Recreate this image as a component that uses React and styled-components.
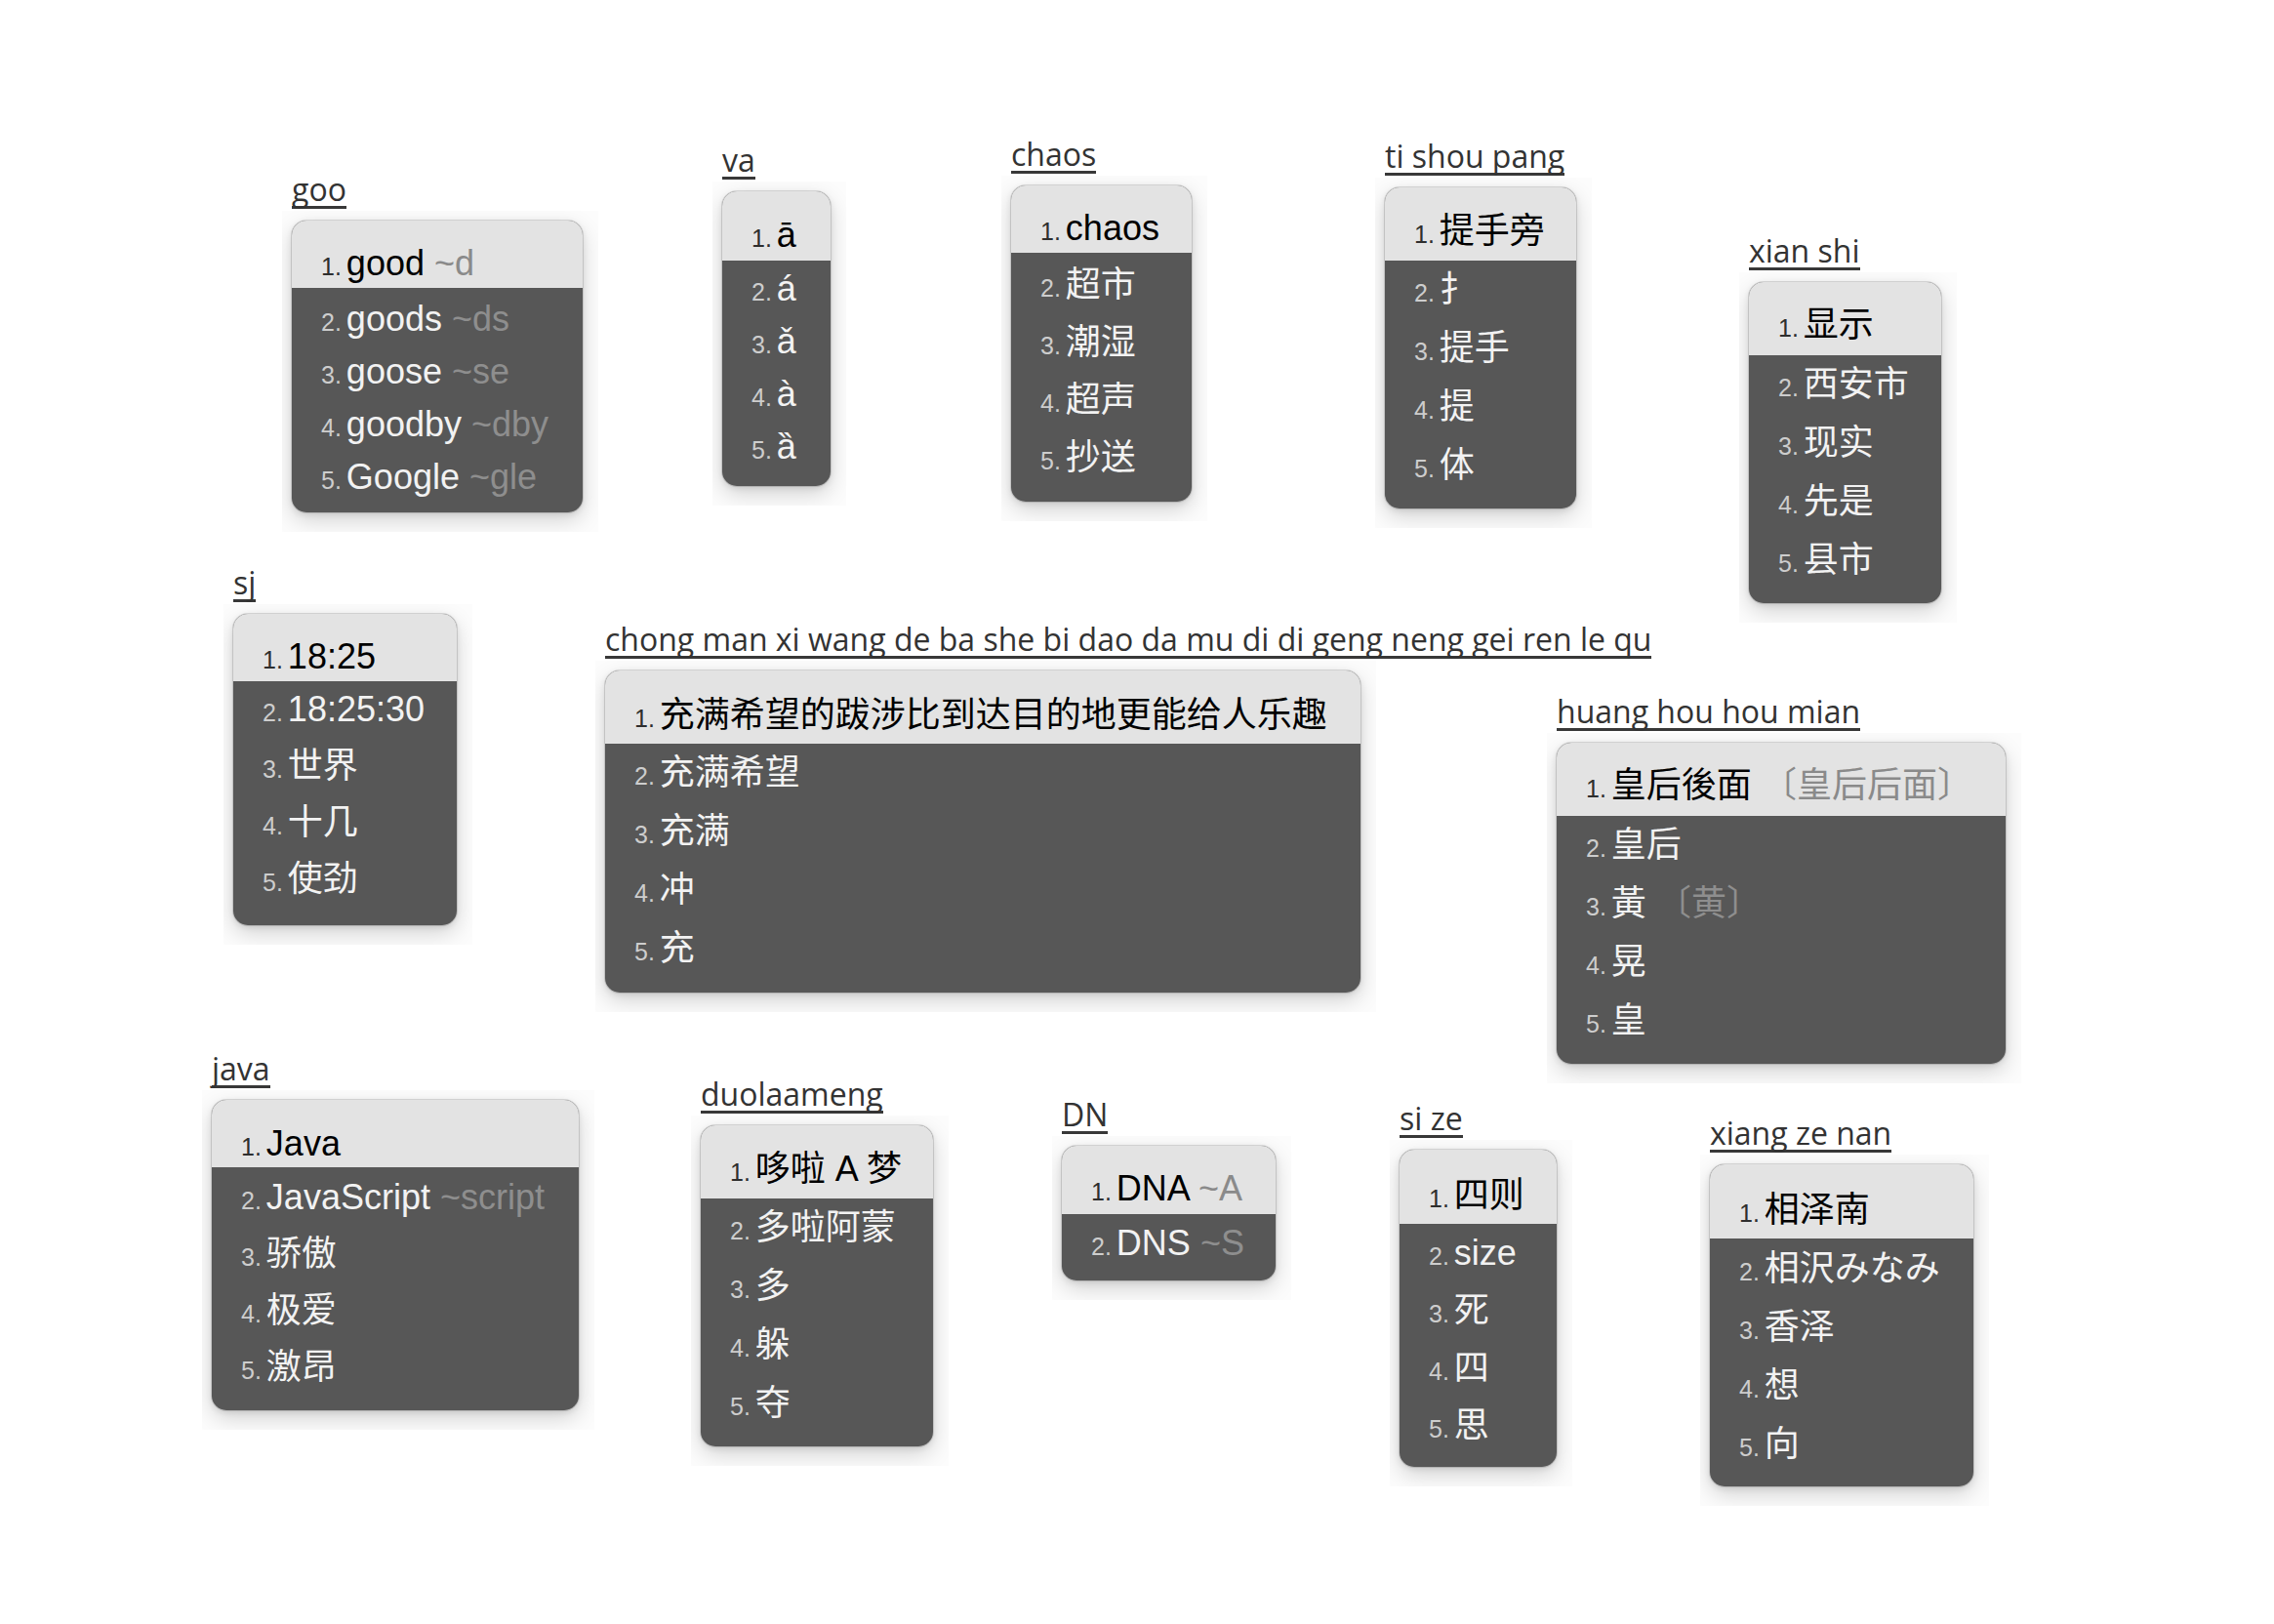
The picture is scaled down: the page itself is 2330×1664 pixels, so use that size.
import React from "react";
import styled, { createGlobalStyle } from "styled-components";

const GlobalStyle = createGlobalStyle`
  html, body {
    margin: 0;
    padding: 0;
    background: #fff;
  }
  body {
    font-family: "Liberation Sans", "Noto Sans CJK SC", sans-serif;
  }
`;

const Canvas = styled.div`
  position: relative;
  width: 2330px;
  height: 1664px;
  background: #fff;
  overflow: hidden;
`;

/* one pasted screenshot: the typed pinyin above, the candidate window below */
const Shot = styled.div`
  position: absolute;
  left: ${(p) => p.$x - 10}px;
  top: ${(p) => p.$y - 50}px;
  display: flex;
  flex-direction: column;
  align-items: flex-start;
`;

const Pinyin = styled.span`
  margin-left: 10px;
  font-family: "Open Sans", "Noto Sans", sans-serif;
  font-size: 32px;
  line-height: 35px;
  color: #333;
  border-bottom: 3px solid #383838;
  white-space: nowrap;
`;

const Frame = styled.div`
  margin-top: 2px;
  padding: 10px 16px 20px 10px;
  background: #fcfcfc;
  overflow: hidden;
`;

const Popup = styled.div`
  width: ${(p) => p.$w}px;
  border-radius: 15px;
  overflow: hidden;
  background: #575757;
  box-shadow: 0 0 0 1px rgba(0, 0, 0, 0.12), 0 8px 22px rgba(0, 0, 0, 0.17),
    0 2px 6px rgba(0, 0, 0, 0.1);
`;

const Current = styled.div`
  box-sizing: border-box;
  height: ${(p) => p.$h}px;
  padding: ${(p) => p.$pad}px 0 0 30px;
  background: #e3e3e3;
  display: flex;
  align-items: center;
`;

const List = styled.div`
  padding: ${(p) => p.$top}px 0 ${(p) => p.$bottom}px;
`;

const Row = styled.div`
  height: ${(p) => p.$h}px;
  padding-left: 30px;
  display: flex;
  align-items: center;
`;

const Line = styled.span`
  white-space: nowrap;
  line-height: 1.15;
`;

const Num = styled.span`
  font-size: 25px;
  margin-right: 5px;
  color: ${(p) => (p.$on ? "#2e2e2e" : "#cdcdcd")};
`;

const Word = styled.span`
  font-size: 36px;
  color: ${(p) => (p.$on ? "#000" : "#f2f2f2")};
`;

const Hint = styled.span`
  color: ${(p) => (p.$on ? "#8a8a8a" : "#8e8e8e")};
`;

const shots = [
  { key: "goo", x: 299, y: 226, w: 298, hl: 69, pad: 19, row: 54, top: 5, bottom: 9,
    items: [["good", "~d"], ["goods", "~ds"], ["goose", "~se"], ["goodby", "~dby"], ["Google", "~gle"]] },
  { key: "va", x: 740, y: 196, w: 111, hl: 71, pad: 19, row: 54, top: 2, bottom: 13,
    items: [["ā"], ["á"], ["ǎ"], ["à"], ["ȁ"]] },
  { key: "chaos", x: 1036, y: 190, w: 185, hl: 69, pad: 19, row: 59, top: 3, bottom: 16,
    items: [["chaos"], ["超市"], ["潮湿"], ["超声"], ["抄送"]] },
  { key: "ti shou pang", x: 1419, y: 192, w: 196, hl: 75, pad: 15, row: 60, top: 0, bottom: 14,
    items: [["提手旁"], ["扌"], ["提手"], ["提"], ["体"]] },
  { key: "xian shi", x: 1792, y: 289, w: 197, hl: 75, pad: 13, row: 60, top: 0, bottom: 14,
    items: [["显示"], ["西安市"], ["现实"], ["先是"], ["县市"]] },
  { key: "sj", x: 239, y: 629, w: 229, hl: 69, pad: 19, row: 58, top: 0, bottom: 18,
    items: [["18:25"], ["18:25:30"], ["世界"], ["十几"], ["使劲"]] },
  { key: "chong man xi wang de ba she bi dao da mu di di geng neng gei ren le qu", x: 620, y: 687, w: 774,
    hl: 75, pad: 17, row: 60, top: 0, bottom: 15,
    items: [["充满希望的跋涉比到达目的地更能给人乐趣"], ["充满希望"], ["充满"], ["冲"], ["充"]] },
  { key: "huang hou hou mian", x: 1595, y: 761, w: 460, hl: 75, pad: 13, row: 60, top: 0, bottom: 14,
    items: [["皇后後面", "〔皇后后面〕"], ["皇后"], ["黃", "〔黄〕"], ["晃"], ["皇"]] },
  { key: "java", x: 217, y: 1127, w: 376, hl: 69, pad: 21, row: 58, top: 2, bottom: 15,
    items: [["Java"], ["JavaScript", "~script"], ["骄傲"], ["极爱"], ["激昂"]] },
  { key: "duolaameng", x: 718, y: 1153, w: 238, hl: 75, pad: 15, row: 60, top: 0, bottom: 14,
    items: [["哆啦 A 梦"], ["多啦阿蒙"], ["多"], ["躲"], ["夺"]] },
  { key: "DN", x: 1088, y: 1174, w: 219, hl: 70, pad: 18, row: 55, top: 2, bottom: 11,
    items: [["DNA", "~A"], ["DNS", "~S"]] },
  { key: "si ze", x: 1434, y: 1178, w: 161, hl: 76, pad: 18, row: 59, top: 0, bottom: 13,
    items: [["四则"], ["size"], ["死"], ["四"], ["思"]] },
  { key: "xiang ze nan", x: 1752, y: 1193, w: 270, hl: 76, pad: 18, row: 60, top: 1, bottom: 13,
    items: [["相泽南"], ["相沢みなみ"], ["香泽"], ["想"], ["向"]] },
];

const Candidate = ({ n, item, on }) => (
  <Line>
    <Num $on={on}>{n}.</Num>
    <Word $on={on}>
      {item[0]}
      {item[1] && <Hint $on={on}> {item[1]}</Hint>}
    </Word>
  </Line>
);

const CandidateShot = ({ s }) => {
  const [first, ...rest] = s.items;
  return (
    <Shot $x={s.x} $y={s.y}>
      <Pinyin>{s.key}</Pinyin>
      <Frame>
        <Popup $w={s.w}>
          <Current $h={s.hl} $pad={s.pad}>
            <Candidate n={1} item={first} on />
          </Current>
          <List $top={s.top} $bottom={s.bottom}>
            {rest.map((item, i) => (
              <Row key={i} $h={s.row}>
                <Candidate n={i + 2} item={item} />
              </Row>
            ))}
          </List>
        </Popup>
      </Frame>
    </Shot>
  );
};

const App = () => (
  <Canvas>
    <GlobalStyle />
    {shots.map((s) => (
      <CandidateShot key={s.key} s={s} />
    ))}
  </Canvas>
);

export default App;
